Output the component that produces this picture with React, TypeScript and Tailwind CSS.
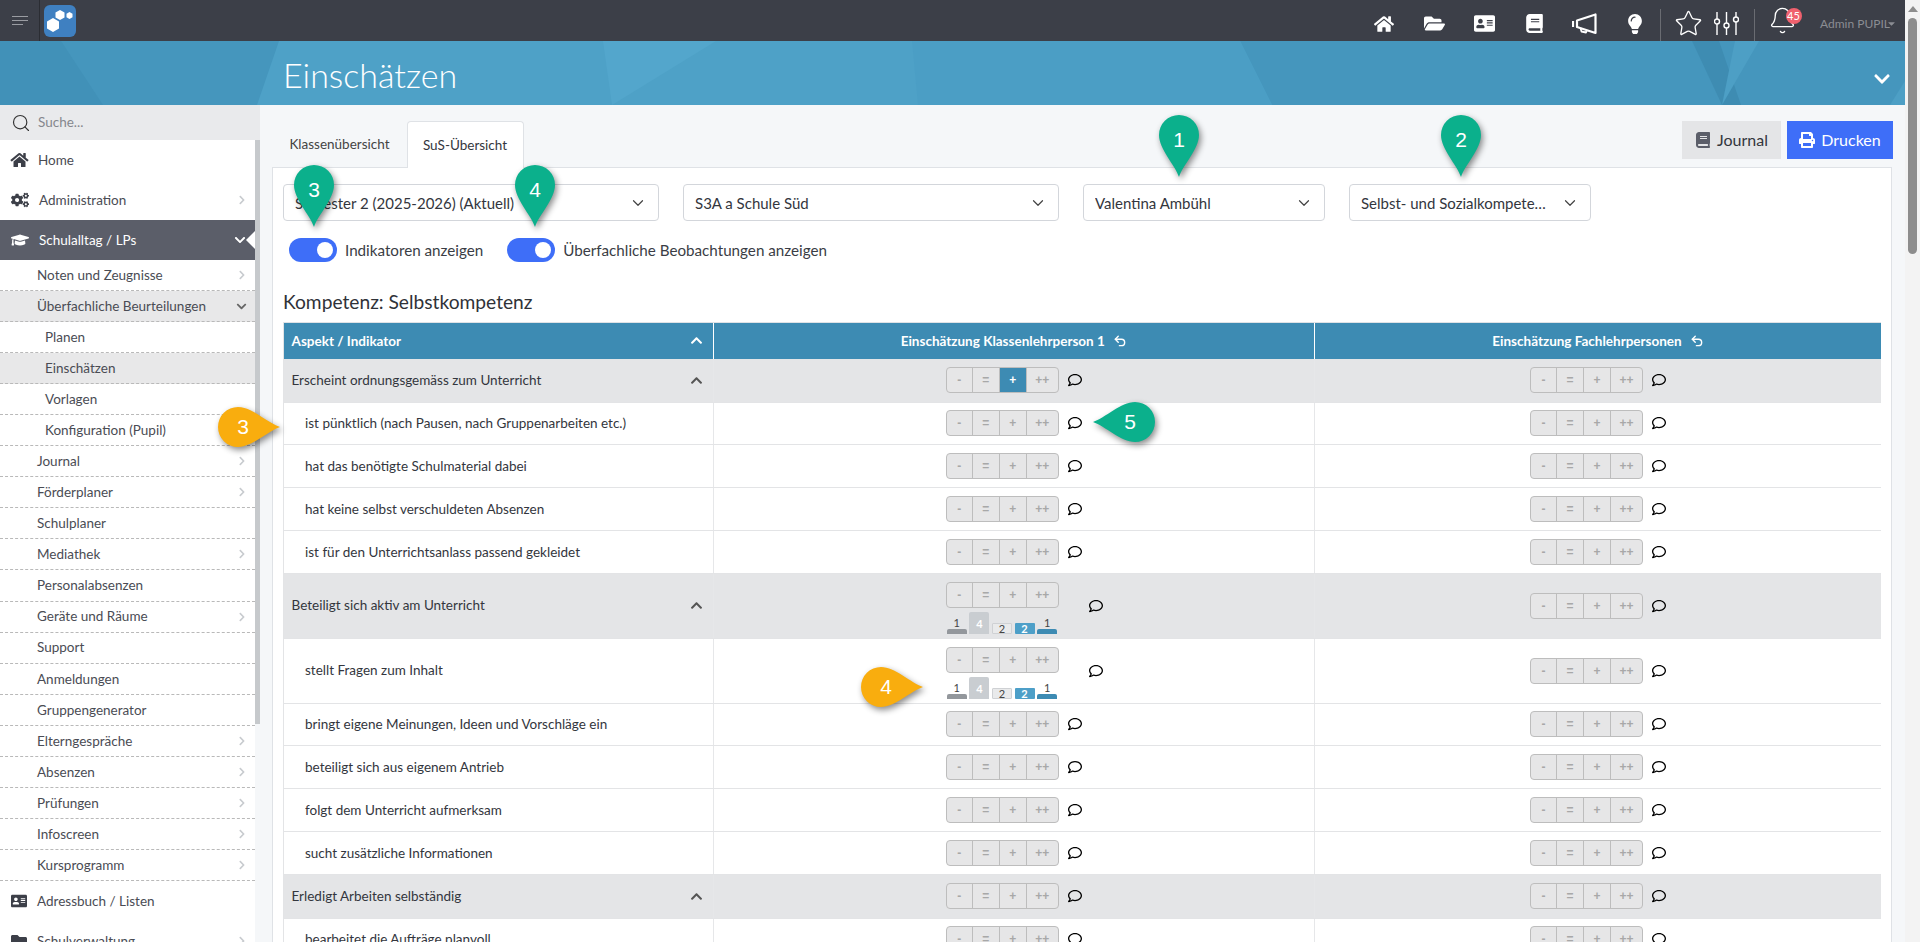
import React from "react";
import { ChevronDown, Search, Bell, Star, Undo2 } from "lucide-react";
import {
  FaHome,
  FaFolderOpen,
  FaFolder,
  FaAddressCard,
  FaBook,
  FaLightbulb,
  FaPrint,
  FaCogs,
  FaGraduationCap,
  FaChevronRight,
  FaChevronDown,
  FaChevronUp,
  FaRegComment,
  FaCaretDown,
} from "react-icons/fa";

type Rating = "-" | "=" | "+" | "++";

const navItems = [
  { label: "Journal", arrow: true },
  { label: "Förderplaner", arrow: true },
  { label: "Schulplaner", arrow: false },
  { label: "Mediathek", arrow: true },
  { label: "Personalabsenzen", arrow: false },
  { label: "Geräte und Räume", arrow: true },
  { label: "Support", arrow: false },
  { label: "Anmeldungen", arrow: false },
  { label: "Gruppengenerator", arrow: false },
  { label: "Elterngespräche", arrow: true },
  { label: "Absenzen", arrow: true },
  { label: "Prüfungen", arrow: true },
  { label: "Infoscreen", arrow: true },
  { label: "Kursprogramm", arrow: true },
];

const Pin = ({ n, dir, color, className }: { n: number; dir: "down" | "left" | "right"; color: string; className: string }) => {
  const path =
    dir === "down"
      ? "M20 62 C16 50 0 34 0 20 A20 20 0 0 1 40 20 C40 34 24 50 20 62 Z"
      : dir === "right"
        ? "M62 20 C50 16 34 0 20 0 A20 20 0 0 0 20 40 C34 40 50 24 62 20 Z"
        : "M0 20 C12 16 28 0 42 0 A20 20 0 0 1 42 40 C28 40 12 24 0 20 Z";
  const down = dir === "down";
  return (
    <div className={`absolute z-30 ${down ? "w-[40px] h-[62px]" : "w-[62px] h-[40px]"} ${className}`}>
      <svg viewBox={down ? "0 0 40 62" : "0 0 62 40"} className="w-full h-full overflow-visible drop-shadow-[2px_3px_3px_rgba(0,0,0,0.45)]">
        <path d={path} fill={color} />
      </svg>
      <span
        className={`absolute flex items-center justify-center text-white text-[21px] font-['Liberation_Sans',sans-serif] ${
          down ? "left-0 top-[5px] w-[40px] h-[40px]" : dir === "right" ? "left-0 top-0 w-[50px] h-[40px]" : "right-0 top-0 w-[50px] h-[40px]"
        }`}
      >
        {n}
      </span>
    </div>
  );
};

const Select = ({ label, className }: { label: string; className: string }) => (
  <div className={`h-[37px] border border-[#d3d6db] rounded-[4px] bg-white flex items-center pl-[11px] pr-[11px] ${className}`}>
    <span className="flex-1 truncate pt-[2px] pr-[10px] text-[15px] text-[#33363d]">{label}</span>
    <ChevronDown size={18} strokeWidth={1.6} className="text-[#444] shrink-0" />
  </div>
);

const Toggle = ({ label }: { label: string }) => (
  <div className="flex items-center">
    <div className="w-[48px] h-[24px] rounded-full bg-[#3e6ef8] flex items-center justify-end pr-[4px]">
      <div className="w-[16px] h-[16px] rounded-full bg-white" />
    </div>
    <span className="ml-[8px] text-[15.2px] text-[#3a3d45]">{label}</span>
  </div>
);

const RatingGroup = ({ active }: { active?: Rating }) => {
  const cells: { v: Rating; w: string }[] = [
    { v: "-", w: "w-[25px]" },
    { v: "=", w: "w-[27px]" },
    { v: "+", w: "w-[27px]" },
    { v: "++", w: "flex-1" },
  ];
  return (
    <div className="w-[113px] h-[26px] flex border border-[#bdbdbd] rounded-[4px] bg-[#e6e6e7] overflow-hidden shrink-0">
      {cells.map((c, i) => (
        <div
          key={c.v}
          className={`${c.w} flex items-center justify-center text-[12px] font-bold leading-none font-['Liberation_Sans',sans-serif] ${
            i > 0 ? "border-l border-[#bdbdbd]" : ""
          } ${active === c.v ? "bg-[#3d8bb3] text-white" : "text-[#a8a8a8]"}`}
        >
          {c.v}
        </div>
      ))}
    </div>
  );
};

const Histogram = () => (
  <div className="flex items-end gap-[2.6px] h-[22px] mt-[4px] ml-[1px] text-[11px] leading-none">
    <div className="w-[20px] flex flex-col items-center">
      <span className="text-[#444] mb-[1px]">1</span>
      <div className="w-full h-[5px] rounded-t-[2px] bg-[#93979c]" />
    </div>
    <div className="w-[20px] h-[22px] rounded-t-[2px] bg-[#c9cdd1] text-white flex items-center justify-center font-bold">4</div>
    <div className="w-[20px] h-[11px] rounded-[1px] bg-[#e9eaeb] border border-[#cfd1d4] text-[#444] flex items-center justify-center">2</div>
    <div className="w-[20px] h-[11px] rounded-[1px] bg-[#4d9fc8] text-white flex items-center justify-center font-bold">2</div>
    <div className="w-[20px] flex flex-col items-center">
      <span className="text-[#444] mb-[1px]">1</span>
      <div className="w-full h-[5px] rounded-t-[2px] bg-[#3d8bb3]" />
    </div>
  </div>
);

const RatingCell = ({ active, hist, className }: { active?: Rating; hist?: boolean; className: string }) => (
  <div className={`flex items-center justify-center border-l border-[#e6e7e9] ${className}`}>
    <div className={hist ? "ml-[21px] mt-[5px]" : ""}>
      <RatingGroup active={active} />
      {hist && <Histogram />}
    </div>
    <FaRegComment size={14} className={`text-black shrink-0 ${hist ? "ml-[30px]" : "ml-[9px]"}`} />
  </div>
);

const Row = ({ label, group, active, hist, height }: { label: string; group?: boolean; active?: Rating; hist?: boolean; height: string }) => (
  <div className={`flex border-b border-[#e3e4e6] ${height} ${group ? "bg-[#e4e5e7]" : "bg-white"}`}>
    <div className={`w-[428.500px] shrink-0 flex items-center text-[13.5px] text-[#33363d] ${group ? "pl-[7.500px] pr-[10px]" : "pl-[21px]"}`}>
      <span className="flex-1 truncate">{label}</span>
      {group && <FaChevronUp size={13} className="text-[#555] shrink-0" />}
    </div>
    <RatingCell active={active} hist={hist} className="w-[601.5px] shrink-0" />
    <RatingCell hist={false} className="flex-1 min-w-0" />
  </div>
);

const Sliders = () => (
  <svg viewBox="0 0 25 25" className="w-[25px] h-[25px]" fill="none" stroke="#fff" strokeWidth="1.4">
    <path d="M3 1v7M3 13v11M12.5 1v11M12.5 17v7M22 1v5M22 11v13" />
    <circle cx="3" cy="10.5" r="2.5" />
    <circle cx="12.5" cy="14.5" r="2.5" />
    <circle cx="22" cy="8.5" r="2.5" />
  </svg>
);

const Horn = () => (
  <svg viewBox="0 0 25 22" className="w-[25px] h-[22px]" fill="none" stroke="#fff" strokeWidth="2.2" strokeLinejoin="round">
    <path d="M5 7.5 L23.5 1.5 V20 L5 14 Z" />
    <path d="M1 8v6" />
    <path d="M8.5 15 L9.5 18.5 L14 19.5 L15 17" strokeWidth="1.8" />
  </svg>
);

const TopBar = () => (
  <header className="h-[41px] bg-[#3c3f48] flex items-center text-white shrink-0">
    <div className="w-[40px] h-full border-r border-[#2b2d33] flex flex-col gap-[3px] pl-[12px] justify-center">
      <div className="w-[16px] h-[1px] bg-[#9a9ca2]" />
      <div className="w-[16px] h-[1px] bg-[#9a9ca2]" />
      <div className="w-[11px] h-[1px] bg-[#9a9ca2]" />
    </div>
    <div className="ml-[4px] w-[32px] h-[32px] rounded-[6px] bg-[#3f80c1]">
      <svg viewBox="0 0 32 32" className="w-full h-full" fill="#fff">
        <polygon points="9,13 15,16.5 15,23.5 9,27 3,23.5 3,16.5" />
        <polygon points="16,5 20.500,7.500 20.500,12.500 16,15 11.500,12.500 11.500,7.500" />
        <polygon points="25.500,7 28.500,8.800 28.500,12.200 25.500,14 22.500,12.200 22.500,8.800" />
      </svg>
    </div>
    <div className="ml-auto flex items-center h-full pt-[6px] pr-[10px]">
      <div className="w-[50.2px] flex justify-center"><FaHome size={20} /></div>
      <div className="w-[50.2px] flex justify-center"><FaFolderOpen size={21} /></div>
      <div className="w-[50.2px] flex justify-center"><FaAddressCard size={21} /></div>
      <div className="w-[50.2px] flex justify-center"><FaBook size={19} /></div>
      <div className="w-[50.2px] flex justify-center"><Horn /></div>
      <div className="w-[50.2px] flex justify-center"><FaLightbulb size={20} /></div>
      <div className="w-[1px] h-[32px] bg-[#6a6c72] self-end" />
      <Star size={29} strokeWidth={1.1} className="ml-[12.500px]" />
      <div className="ml-[11px]"><Sliders /></div>
      <div className="w-[1px] h-[32px] bg-[#6a6c72] self-end ml-[15px]" />
      <div className="relative ml-[13px] w-[29px] -translate-y-[3px]">
        <Bell size={29} strokeWidth={1.1} />
        <span className="absolute top-[2px] left-[18px] w-[16px] h-[16px] rounded-full bg-[#f0616e] text-[11px] leading-[16px] text-center text-white">45</span>
      </div>
      <span className="ml-[23.500px] w-[65px] text-[12px] text-[#8b8d93] whitespace-nowrap">Admin PUPIL</span>
      <FaCaretDown className="w-[7px] h-[11px] text-[#8b8d93] ml-[3px]" />
    </div>
  </header>
);

const Band = () => (
  <div className="relative h-[64px] bg-[#4596bd] shrink-0 overflow-hidden">
    <svg viewBox="0 0 1905 64" preserveAspectRatio="none" className="absolute inset-0 w-full h-full">
      <polygon points="0,0 61,0 103,64 0,64" fill="#4191b8" />
      <polygon points="279,0 1240,0 1272,64 257,64" fill="#4ea1c7" />
      <polygon points="603,0 716,0 612,64" fill="#53a6cc" />
      <polygon points="912,0 1240,0 1272,64 918,64" fill="#4b9ec5" />
      <polygon points="1692,0 1719,0 1741,64 1722,64" fill="#3e8cb2" />
      <polygon points="1735,0 1759,0 1722,64" fill="#4d9fc5" />
      <polygon points="1905,40 1905,64 1890,64" fill="#4d9fc5" />
    </svg>
    <h1 className="absolute left-[283px] top-[12px] text-[34px] font-light leading-[44px] text-white">Einschätzen</h1>
    <FaChevronDown size={18} className="absolute right-[14px] top-[29px] text-white" />
  </div>
);

const SideRow = ({ label, indent, arrow, active, down }: { label: string; indent: string; arrow?: boolean; active?: boolean; down?: boolean }) => (
  <div className={`h-[31.05px] flex items-center border-b border-dashed border-[#b9b9b9] text-[13.5px] text-[#4a4c54] pr-[8px] ${indent} ${active ? "bg-[#e8e8e9]" : "bg-white"}`}>
    <span className="flex-1">{label}</span>
    {arrow && <FaChevronRight size={10} className="text-[#c8cbcf]" />}
    {down && <FaChevronDown size={11} className="text-[#666]" />}
  </div>
);

const Sidebar = () => (
  <aside className="w-[260px] shrink-0 flex flex-col bg-[#f5f7f9] min-h-0">
    <div className="h-[35px] bg-[#e9eaec] flex items-center pl-[11px] shrink-0">
      <Search size={20} strokeWidth={1.4} className="text-[#333]" />
      <span className="ml-[7px] text-[13.5px] text-[#85878c]">Suche...</span>
    </div>
    <nav className="relative w-[255px] flex-1 min-h-0 bg-white">
      <div className="h-[40px] flex items-center pl-[11px] text-[13.5px] text-[#4a4c54]">
        <FaHome size={16} className="text-[#3c3f48] w-[27px] -ml-[5px]" />
        <span className="ml-[5px]">Home</span>
      </div>
      <div className="h-[40px] flex items-center pl-[11px] pr-[8px] text-[13.5px] text-[#4a4c54]">
        <FaCogs size={18} className="text-[#3c3f48]" />
        <span className="ml-[10px] flex-1">Administration</span>
        <FaChevronRight size={10} className="text-[#c8cbcf]" />
      </div>
      <div className="relative h-[40px] flex items-center pl-[11px] pr-[9px] bg-[#5b5e69] text-[13.5px] text-white">
        <FaGraduationCap size={18} />
        <span className="ml-[10px] flex-1">Schulalltag / LPs</span>
        <FaChevronDown size={12} />
        <div className="absolute right-0 top-[11px] w-0 h-0 border-y-[9px] border-y-transparent border-r-[9px] border-r-white" />
      </div>
      <SideRow label="Noten und Zeugnisse" indent="pl-[37px]" arrow />
      <SideRow label="Überfachliche Beurteilungen" indent="pl-[37px]" active down />
      <SideRow label="Planen" indent="pl-[45px]" />
      <SideRow label="Einschätzen" indent="pl-[45px]" active />
      <SideRow label="Vorlagen" indent="pl-[45px]" />
      <SideRow label="Konfiguration (Pupil)" indent="pl-[45px]" />
      {navItems.map((item) => (
        <SideRow key={item.label} label={item.label} indent="pl-[37px]" arrow={item.arrow} />
      ))}
      <div className="h-[40px] flex items-center pl-[11px] text-[13.5px] text-[#4a4c54]">
        <FaAddressCard size={16} className="text-[#3c3f48]" />
        <span className="ml-[10px]">Adressbuch / Listen</span>
      </div>
      <div className="h-[40px] flex items-center pl-[11px] pr-[8px] text-[13.5px] text-[#4a4c54]">
        <FaFolder size={16} className="text-[#3c3f48]" />
        <span className="ml-[10px] flex-1">Schulverwaltung</span>
        <FaChevronRight size={10} className="text-[#c8cbcf]" />
      </div>
    </nav>
  </aside>
);

const Main = () => (
  <main className="flex-1 min-w-0 bg-[#f5f7f9] pl-[12px] pr-[13px] pt-[16px] overflow-hidden">
    <div className="flex h-[47px] items-start">
      <div className="h-[47px] w-[134.500px] flex items-center justify-end pr-[17px] text-[13.5px] text-[#444]">Klassenübersicht</div>
      <div className="relative z-10 h-[47px] w-[117px] bg-white border border-b-0 border-[#dfe2e6] rounded-t-[4px] flex items-center justify-center text-[13.5px] text-[#33363d]">
        SuS-Übersicht
      </div>
      <div className="ml-auto -mr-[1px] flex gap-[6px]">
        <button className="w-[99px] h-[38px] bg-[#e4e5e7] flex items-center justify-center gap-[6px] text-[16px] text-[#33363d]">
          <FaBook size={16} className="text-[#5b5e69]" />
          Journal
        </button>
        <button className="w-[106px] h-[38px] bg-[#3e6ef8] flex items-center justify-center gap-[6px] text-[16px] text-white">
          <FaPrint size={16} />
          Drucken
        </button>
      </div>
    </div>
    <section className="-mt-px border border-[#dfe2e6] bg-white pl-[10px] pr-[10px] pt-[16px] h-[800px]">
      <div className="flex gap-[24px]">
        <Select label="Semester 2 (2025-2026) (Aktuell)" className="w-[376px]" />
        <Select label="S3A a Schule Süd" className="w-[376px]" />
        <Select label="Valentina Ambühl" className="w-[242px]" />
        <Select label="Selbst- und Sozialkompetenzen" className="w-[242px]" />
      </div>
      <div className="flex gap-[24px] mt-[17px] ml-[6px]">
        <Toggle label="Indikatoren anzeigen" />
        <Toggle label="Überfachliche Beobachtungen anzeigen" />
      </div>
      <h2 className="mt-[26px] text-[19.2px] leading-[28px] text-[#2f3238]">Kompetenz: Selbstkompetenz</h2>
      <div className="mt-[6px] border-l border-[#e3e4e6]">
        <div className="flex h-[36.500px] bg-[#3d8bb3] text-white text-[13.5px] font-bold border-t border-[#dfe2e6]">
          <div className="w-[428.500px] shrink-0 flex items-center pl-[7.500px] pr-[10px]">
            <span className="flex-1">Aspekt / Indikator</span>
            <FaChevronUp size={13} />
          </div>
          <div className="w-[601.5px] shrink-0 flex items-center justify-center gap-[8px] border-l border-white">
            Einschätzung Klassenlehrperson 1 <Undo2 size={14} strokeWidth={2.4} />
          </div>
          <div className="flex-1 flex items-center justify-center gap-[8px] border-l border-white">
            Einschätzung Fachlehrpersonen <Undo2 size={14} strokeWidth={2.4} />
          </div>
        </div>
        <Row group label="Erscheint ordnungsgemäss zum Unterricht" active="+" height="h-[44px]" />
        <Row label="ist pünktlich (nach Pausen, nach Gruppenarbeiten etc.)" height="h-[42.75px]" />
        <Row label="hat das benötigte Schulmaterial dabei" height="h-[42.75px]" />
        <Row label="hat keine selbst verschuldeten Absenzen" height="h-[42.75px]" />
        <Row label="ist für den Unterrichtsanlass passend gekleidet" height="h-[42.75px]" />
        <Row group hist label="Beteiligt sich aktiv am Unterricht" height="h-[65px]" />
        <Row hist label="stellt Fragen zum Inhalt" height="h-[65px]" />
        <Row label="bringt eigene Meinungen, Ideen und Vorschläge ein" height="h-[42.75px]" />
        <Row label="beteiligt sich aus eigenem Antrieb" height="h-[42.75px]" />
        <Row label="folgt dem Unterricht aufmerksam" height="h-[42.75px]" />
        <Row label="sucht zusätzliche Informationen" height="h-[42.75px]" />
        <Row group label="Erledigt Arbeiten selbständig" height="h-[44px]" />
        <Row label="bearbeitet die Aufträge planvoll" height="h-[42.75px]" />
      </div>
    </section>
  </main>
);

const PageScrollbar = () => (
  <div className="w-[15px] h-full bg-[#f3f3f3] flex flex-col items-center shrink-0">
    <div className="mt-[6px] w-0 h-0 border-x-[5px] border-x-transparent border-b-[6px] border-b-[#8d8d8d]" />
    <div className="mt-[6px] w-[9px] h-[236px] rounded-full bg-[#8d8d8d]" />
  </div>
);

export default function App() {
  return (
    <div className="relative flex h-[942px] w-full overflow-hidden font-['Lato',sans-serif]">
      <div className="flex-1 min-w-0 flex flex-col">
        <TopBar />
        <Band />
        <div className="flex flex-1 min-h-0">
          <Sidebar />
          <Main />
        </div>
      </div>
      <PageScrollbar />
      <div className="absolute z-20 left-[255px] top-[140px] w-[5px] h-[584px] bg-[#c6c9cc]" />
      <Pin n={3} dir="down" color="#0bb08c" className="left-[294px] top-[165px]" />
      <Pin n={4} dir="down" color="#0bb08c" className="left-[515px] top-[165px]" />
      <Pin n={1} dir="down" color="#0bb08c" className="left-[1159px] top-[115px]" />
      <Pin n={2} dir="down" color="#0bb08c" className="left-[1441px] top-[115px]" />
      <Pin n={3} dir="right" color="#f9ad0e" className="left-[218px] top-[407px]" />
      <Pin n={4} dir="right" color="#f9ad0e" className="left-[861px] top-[667px]" />
      <Pin n={5} dir="left" color="#0bb08c" className="left-[1093px] top-[402px]" />
    </div>
  );
}
